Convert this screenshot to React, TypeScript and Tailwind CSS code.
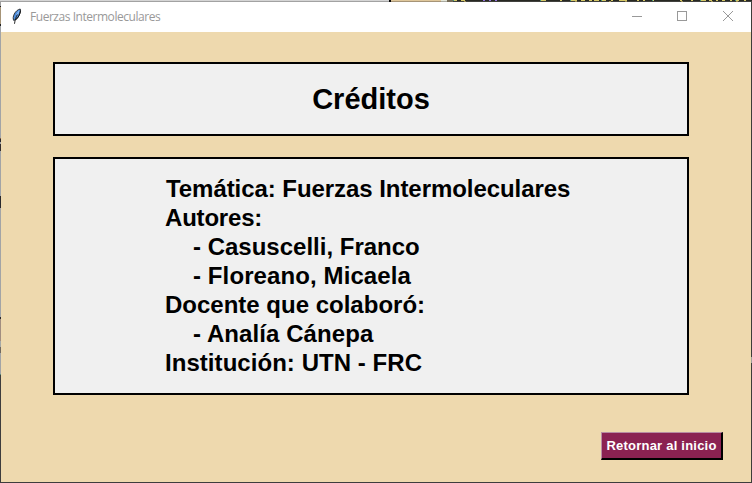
const creditLines = [
  { text: "Temática: Fuerzas Intermoleculares", style: "pl-px tracking-[-0.06px]" },
  { text: "Autores:", style: "tracking-[-0.2px]" },
  { text: "- Casuscelli, Franco", style: "pl-7" },
  { text: "- Floreano, Micaela", style: "pl-7 tracking-[0.1px]" },
  { text: "Docente que colaboró:", style: "" },
  { text: "- Analía Cánepa", style: "pl-7 tracking-[0.08px]" },
  { text: "Institución: UTN - FRC", style: "tracking-[0.05px]" },
];

function FeatherIcon() {
  return (
    <svg width="10" height="17" viewBox="0 0 10 17" className="block">
      <path d="M8.200 1C5.800 1.500 3.600 3.400 2.300 6 1 8.600.9 10.800 1.700 12.400c2.300-.5 4.200-2.500 5.300-5C8.200 4.800 9 2.700 8.200 1Z" fill="#4f8fe0" stroke="#222" strokeWidth="0.900" />
      <path d="M7.200 3 4.600 7.500" stroke="#8fbdf5" strokeWidth="1.200" />
      <path d="M5.400 6.500C4 9 3 12 2.500 15.800" stroke="#111" strokeWidth="0.900" fill="none" />
      <path d="M8.400 2.500C8.300 6 6.500 9.500 3.500 12" stroke="#111" strokeWidth="1" fill="none" />
    </svg>
  );
}

/* Slices of the desktop visible above the window */
function TopEdge() {
  return (
    <svg width="752" height="2" viewBox="0 0 752 2" className="block shrink-0" shapeRendering="crispEdges">
      <rect width="389" height="1" fill="#d5d5d5" />
      <rect y="1" width="389" height="1" fill="#a2a2a2" />
      <rect x="389" width="2" height="2" fill="#090909" />
      <rect x="391" width="50" height="1" fill="#dfc79b" />
      <rect x="391" y="1" width="50" height="1" fill="#a69477" />
      <rect x="441" width="6" height="1" fill="#e4e6d8" />
      <rect x="441" y="1" width="6" height="1" fill="#aaaaa0" />
      <rect x="447" width="6" height="2" fill="#756b57" />
      <rect x="453" width="299" height="1" fill="#272822" />
      <rect x="453" y="1" width="299" height="1" fill="#41413d" />
      <path d="M454 .5h3M461 .5h4M541 .5h5M560 .5h2M571 .5h6M581 .5h4M589 .5h3M594 .5h5M602 .5h4M611 .5h2M619 .5h8M637 .5h2M643 .5h2M652 .5h2M680 .5h2M691 .5h2M701 .5h5M709 .5h3M716 .5h2M722 .5h3M730 .5h2M736 .5h3M744 .5h2" stroke="#d5c766" />
      <path d="M464 1.500h2M575 1.500h2M609 1.500h2M625 1.500h2M681 1.500h2M711 1.500h2M736 1.500h2" stroke="#9b8c51" />
      <path d="M483 .5h2M489 .5h2M495 .5h2" stroke="#9271dc" />
      <path d="M453 .5h1M540 .5h1M570 .5h1M601 .5h1M652 .5h1M700 .5h1M735 .5h1" stroke="#3f9c85" />
    </svg>
  );
}

function LeftEdge() {
  return (
    <div className="flex w-px shrink-0 flex-col bg-[#3d3d3d]">
      <div className="h-1 bg-[#a0a0a0]" />
      <div className="h-px bg-[#222]" />
      <div className="h-[17px] bg-[#a69477]" />
      <div className="h-0.5 bg-[#222]" />
      <div className="h-[112px] bg-[#a2a4a6]" />
      <div className="h-px bg-[#7c5b45]" />
      <div className="h-[3px] bg-[#29292d]" />
      <div className="h-0.5 bg-[#a2a4a6]" />
      <div className="h-[7px] bg-[#332d2e]" />
      <div className="h-[45px] bg-[#a2a4a6]" />
      <div className="h-3 bg-[#29292d]" />
      <div className="h-[109px] bg-[#a2a4a6]" />
      <div className="h-0.5 bg-[#29292d]" />
      <div className="h-[22px] bg-[#a18e80]" />
      <div className="h-1.5 bg-[#a5a9a7]" />
      <div className="h-1.5 bg-[#70695f]" />
      <div className="h-[21px] bg-[#a2a4a6]" />
      <div className="h-px bg-[#548a7a]" />
    </div>
  );
}

function TitleBar() {
  return (
    <header className="flex h-[30px] shrink-0 items-start bg-white">
      <div className="pt-[6px] pl-[11px]"><FeatherIcon /></div>
      <span className="ml-2 mt-1.5 whitespace-nowrap font-['Open_Sans','Noto_Sans',sans-serif] text-[12px] leading-[18px] tracking-[-0.46px] text-[#999]">
        Fuerzas Intermoleculares
      </span>
      <svg width="106" height="12" viewBox="0 0 106 12" className="mt-[8px] mr-[14px] ml-auto shrink-0" fill="none" stroke="#999">
        <path d="M1 6.500h10" />
        <rect x="46.500" y="1.500" width="9" height="9" />
        <path d="m92 1 10 10M102 1 92 11" />
      </svg>
    </header>
  );
}

export default function App() {
  return (
    <div className="flex h-[483px] w-[752px] flex-col overflow-hidden font-['Liberation_Sans',Arial,sans-serif]">
      <TopEdge />
      <div className="flex min-h-0 flex-1">
        <LeftEdge />
        <div className="flex flex-1 flex-col border-b border-[#3d3d3d]">
          <TitleBar />
          <main className="flex flex-1 flex-col bg-[#eed9ae] pt-[30px] pl-[52px]">
            <section className="flex h-[74px] w-[636px] items-center justify-center border-2 border-black bg-[#f0f0f0]">
              <h1 className="text-[29px] leading-[34px] font-bold text-black">Créditos</h1>
            </section>
            <section className="mt-[21px] h-[238px] w-[636px] border-2 border-black bg-[#f0f0f0] pt-[15px] pl-[110px] text-[24px] leading-[29px] font-bold whitespace-nowrap text-black">
              {creditLines.map((line) => (
                <p key={line.text} className={line.style}>
                  {line.text}
                </p>
              ))}
            </section>
            <button className="mt-[37px] mr-7 flex h-7 w-[122px] items-center justify-center self-end border-t border-r-2 border-b-2 border-l border-t-[#b88da3] border-r-black border-b-black border-l-[#b88da3] bg-[#8b2252] pt-px text-[13px] font-bold tracking-[0.22px] whitespace-nowrap text-white">
              Retornar al inicio
            </button>
          </main>
        </div>
        <div className="flex w-px shrink-0 flex-col bg-[#3d3d39]">
          <div className="mt-[355px] h-1.5 bg-[#a2a29c]" />
        </div>
      </div>
    </div>
  );
}
